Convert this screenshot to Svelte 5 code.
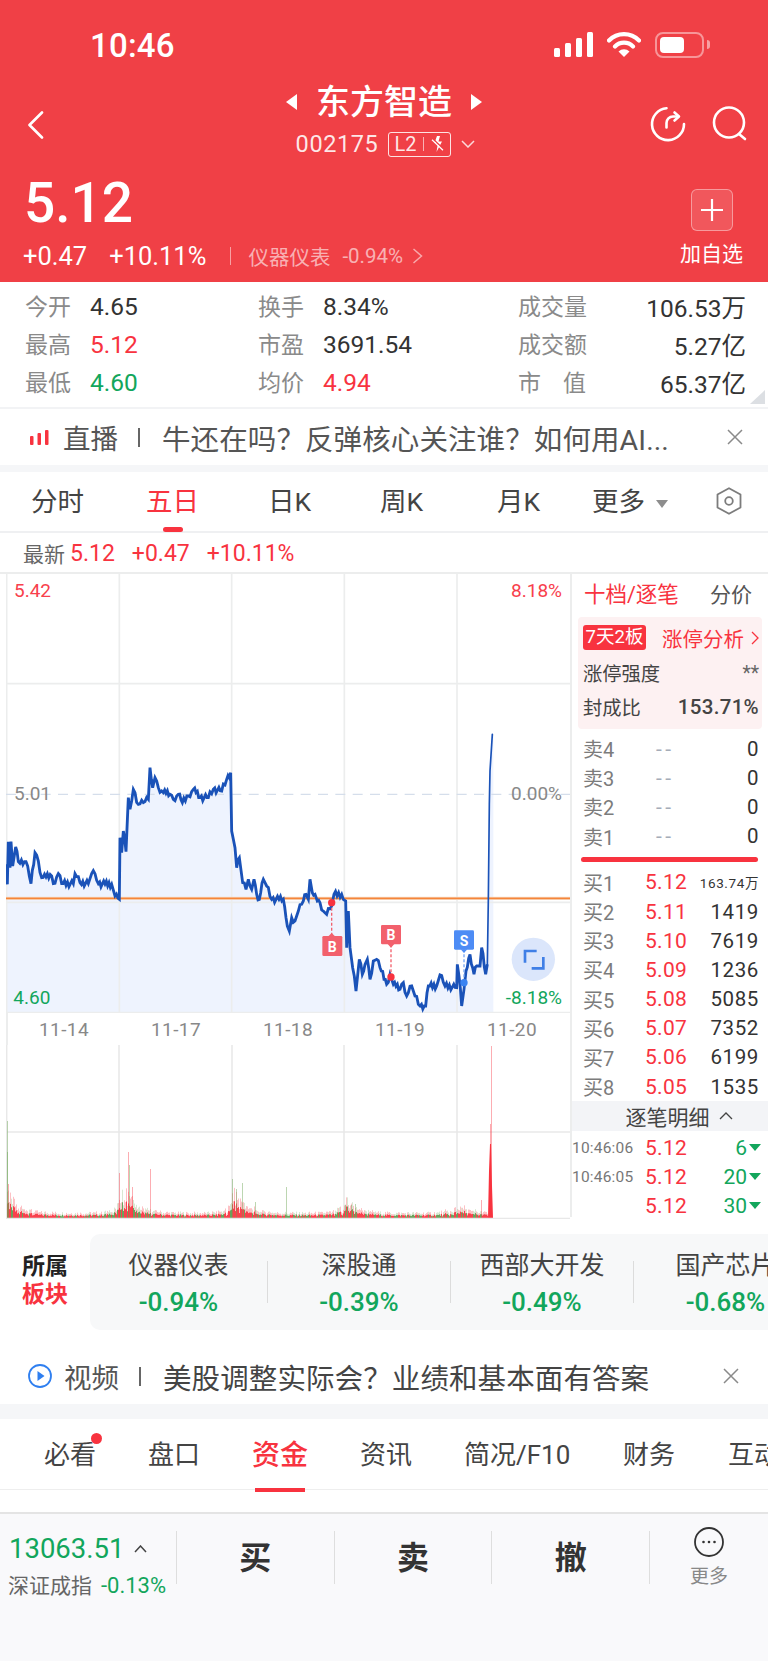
<script>
	const stats = [
		[['今开', '4.65', ''], ['换手', '8.34%', ''], ['成交量', '106.53万', '']],
		[['最高', '5.12', 'up'], ['市盈', '3691.54', ''], ['成交额', '5.27亿', '']],
		[['最低', '4.60', 'down'], ['均价', '4.94', 'up'], ['市值', '65.37亿', '']]
	];
	const periods = ['分时', '五日', '日K', '周K', '月K'];
	const dates = ['11-14', '11-17', '11-18', '11-19', '11-20'];
	const sells = ['卖4', '卖3', '卖2', '卖1'];
	const buys = [
		['买1', '5.12', '163.74万'],
		['买2', '5.11', '1419'],
		['买3', '5.10', '7619'],
		['买4', '5.09', '1236'],
		['买5', '5.08', '5085'],
		['买6', '5.07', '7352'],
		['买7', '5.06', '6199'],
		['买8', '5.05', '1535']
	];
	const trades = [
		['10:46:06', '5.12', '6'],
		['10:46:05', '5.12', '20'],
		['', '5.12', '30']
	];
	const sectors = [
		['仪器仪表', '-0.94%'],
		['深股通', '-0.39%'],
		['西部大开发', '-0.49%'],
		['国产芯片', '-0.68%']
	];
	const tabs = ['必看', '盘口', '资金', '资讯', '简况/F10', '财务', '互动'];
	const qm = '\uFF1F';
	const liveText = `牛还在吗${qm}反弹核心关注谁${qm}如何用AI...`;
	const videoText = `美股调整实际会${qm}业绩和基本面有答案`;

	// price waypoints, measured at 3x (chart svg uses the same units)
	const waypoints = [
		[18,880],[22,940],[25,812],[30,890],[33,812],[38,885],[47,828],[55,872],[78,872],[93,938],[105,845],[115,870],[125,920],
		[155,915],[160,938],[175,908],[185,938],[220,938],[225,908],[240,935],[265,938],[275,908],[285,908],[295,938],[335,940],[345,975],[358,985],
		[360,800],[365,845],[370,780],[378,842],[385,680],[390,715],[400,655],[415,700],[430,695],[445,685],[450,590],[458,650],[465,620],[475,650],
		[490,665],[510,670],[520,685],[535,670],[547,695],[565,675],[580,655],[600,680],[625,680],[640,655],[665,660],[680,625],[692,605],
		[695,780],[705,830],[710,890],[718,860],[728,935],[738,955],[745,925],[755,955],[762,925],[770,970],[778,985],[790,925],[800,945],[815,985],[850,985],
		[858,1040],[862,1065],[868,1080],[875,1040],[885,1050],[895,1020],[910,990],[918,970],[925,985],[930,925],[937,965],[945,970],[952,990],[960,995],
		[970,1020],[980,1030],[995,1005],[1002,970],[1025,970],[1030,985],[1037,990],[1040,1130],[1045,1020],[1050,1130],[1058,1190],[1068,1260],
		[1078,1165],[1087,1210],[1095,1180],[1102,1165],[1110,1225],[1120,1170],[1130,1165],[1140,1190],[1160,1240],[1170,1210],[1180,1240],[1200,1255],
		[1210,1235],[1220,1275],[1235,1245],[1245,1275],[1260,1305],[1277,1305],[1285,1245],[1310,1245],[1320,1212],[1335,1245],[1370,1250],[1372,1180],
		[1377,1215],[1385,1305],[1392,1255],[1398,1200],[1410,1150],[1422,1210],[1430,1185],[1440,1185],[1445,1130],[1457,1210],[1462,1180]
	];
	const tail = [[1462,1180],[1465,985],[1468,700],[1470,600],[1477,490]];
	const wobble = [0, -9, 5, -5, 9, 0, -9];

	function stepped(points) {
		const out = [];
		let k = 0;
		for (let i = 0; i < points.length - 1; i++) {
			const [x0, y0] = points[i];
			const [x1, y1] = points[i + 1];
			const n = Math.max(1, Math.floor((x1 - x0) / 4));
			for (let j = 0; j < n; j++) {
				const x = x0 + ((x1 - x0) * j) / n;
				const y = y0 + ((y1 - y0) * j) / n + (j && n > 1 ? wobble[k++ % 7] : 0);
				out.push(`${x.toFixed(1)},${y.toFixed(1)}`);
			}
		}
		out.push(points[points.length - 1].join(','));
		return out.join(' ');
	}
	const line = stepped(waypoints);
	const tailLine = tail.map((p) => p.join(',')).join(' ');
	const area = `18,1325 ${line} ${tailLine} 1480,490 1480,1325`;

	function rand(i) {
		const s = Math.sin(i * 12.9898) * 43758.5453;
		return s - Math.floor(s);
	}

	// volume bars, x in px from the left of the page, h in px
	const bars = [];
	for (let x = 7; x < 488; x++) {
		const t = ((x - 6) % 113) / 113;
		const session = Math.floor((x - 6) / 113);
		const boost = [12, 20, 14, 9, 5][session];
		const h = 1.5 + rand(x) * 2 + boost * Math.exp(-t * 9) * (0.3 + rand(x + 500)) + 7 * Math.exp(-(1 - t) * 14) * rand(x + 90);
		bars.push({ x, h, green: rand(x + 33) > 0.66 });
	}
	const spikes = [
		[7, 97, 1], [7, 66, 1], [8, 34, 0], [119, 45, 0], [128, 66, 0], [129, 53, 1], [132, 31, 0], [150, 49, 0], [232, 39, 1], [236, 29, 1],
		[242, 35, 1], [255, 16, 1], [286, 31, 1], [345, 13, 1], [351, 13, 1], [355, 14, 1], [481, 18, 0], [491, 172, 0], [490, 94, 0]
	];
</script>

<div class="page">
	<header class="head">
		<div class="status">
			<span class="time">10:46</span>
			<div class="status-icons">
				<svg width="39" height="25" viewBox="0 0 39 25" fill="#fff">
					<rect x="0" y="16" width="6" height="9" rx="1.5" />
					<rect x="11" y="11" width="6" height="14" rx="1.5" />
					<rect x="22" y="6" width="6" height="19" rx="1.5" />
					<rect x="33" y="0" width="6" height="25" rx="1.5" />
				</svg>
				<svg class="wifi" width="34" height="25" viewBox="0 0 34 25">
					<path d="M2 8.5A21 21 0 0 1 32 8.5M8 14.5A12.5 12.5 0 0 1 26 14.5" fill="none" stroke="#fff" stroke-width="4.2" stroke-linecap="round" />
					<path d="M11.5 19.5A8 8 0 0 1 22.5 19.5L17 25Z" fill="#fff" />
				</svg>
				<div class="battery"><i></i></div>
				<span class="nub"></span>
			</div>
		</div>

		<div class="nav">
			<svg class="back" width="17" height="28" viewBox="0 0 17 28">
				<path d="M15 1.5L2.5 14L15 26.5" fill="none" stroke="#fff" stroke-width="2.6" stroke-linecap="round" stroke-linejoin="round" />
			</svg>
			<div class="title">
				<div class="name">
					<span class="tri tri-l"></span>
					<span>东方智造</span>
					<span class="tri tri-r"></span>
				</div>
				<div class="code">
					<span>002175</span>
					<span class="l2">
						L2<i></i>
						<svg width="14" height="18" viewBox="0 0 14 18">
							<path d="M6 1L3.5 8H7L5.5 17L11 6.5H7.5L9 1Z" fill="#fff" />
							<path d="M1.5 3.5L12.5 14" stroke="#f04046" stroke-width="1.5" />
							<path d="M1 4.8L12 15.3" stroke="#fff" stroke-width="1.2" />
						</svg>
					</span>
					<svg width="14" height="8" viewBox="0 0 14 8">
						<path d="M1 1L7 7L13 1" fill="none" stroke="#fff" stroke-opacity="0.8" stroke-width="1.5" />
					</svg>
				</div>
			</div>
			<div class="nav-icons">
				<svg width="36" height="36" viewBox="0 0 36 36" fill="none" stroke="#fff" stroke-width="2.6" stroke-linecap="round" stroke-linejoin="round">
					<path d="M16.5 2.2A16 16 0 1 0 34 18" />
					<path d="M16.5 21.5V17A6.5 6.5 0 0 1 23 10.5H28" />
					<path d="M24.5 6.5L29 10.5L24.5 14.5" />
				</svg>
				<svg width="36" height="36" viewBox="0 0 36 36" fill="none" stroke="#fff" stroke-width="2.6" stroke-linecap="round">
					<circle cx="17" cy="16.5" r="15" />
					<path d="M27 28L33 33" />
				</svg>
			</div>
		</div>

		<div class="quote">
			<div>
				<div class="price">5.12</div>
				<div class="change">
					<span>+0.47</span>
					<span class="ch2">+10.11%</span>
					<i></i>
					<span class="sector">仪器仪表</span>
					<span class="sector-pct">-0.94%</span>
					<svg width="11" height="16" viewBox="0 0 11 16">
						<path d="M1.5 1L9.5 8L1.5 15" fill="none" stroke="#fff" stroke-opacity="0.55" stroke-width="1.5" />
					</svg>
				</div>
			</div>
			<div class="watch">
				<div class="plus">
					<svg width="22" height="22" viewBox="0 0 22 22">
						<path d="M11 0V22M0 11H22" stroke="#fff" stroke-width="2.2" />
					</svg>
				</div>
				<span>加自选</span>
			</div>
		</div>
	</header>

	<section class="stats">
		{#each stats as row}
			{#each row as [label, value, tone], c}
				<div class="stat" class:last={c === 2}>
					<span class="stat-label" class:spread={label === '市值'}>{label}</span>
					<span class="stat-value {tone}">{value}</span>
				</div>
			{/each}
		{/each}
		<span class="corner"></span>
	</section>

	<div class="notice top-rule">
		<svg class="notice-icon" width="19" height="15" viewBox="0 0 19 15" fill="#f8333f">
			<rect x="0" y="6" width="3.5" height="9" rx="1" />
			<rect x="7.5" y="3" width="3.5" height="12" rx="1" />
			<rect x="15" y="0" width="3.5" height="15" rx="1" />
		</svg>
		<span class="notice-tag">直播</span>
		<span class="notice-sep"></span>
		<span class="notice-text">{liveText}</span>
		<svg class="close" width="16" height="16" viewBox="0 0 16 16">
			<path d="M1 1L15 15M15 1L1 15" stroke="#8a8a8a" stroke-width="1.5" />
		</svg>
	</div>
	<div class="gap"></div>

	<nav class="periods">
		{#each periods as p, i}
			<div class="period p{i}" class:on={i === 1}>{p}</div>
		{/each}
		<div class="period more">更多<span class="caret"></span></div>
		<svg class="hex" width="26" height="28" viewBox="0 0 26 28" fill="none" stroke="#7c7c7c" stroke-width="1.8">
			<path d="M13 1.2L24.5 7.5V20.5L13 26.8L1.5 20.5V7.5Z" stroke-linejoin="round" />
			<circle cx="13" cy="14" r="3.8" />
		</svg>
	</nav>

	<div class="latest">
		<span class="latest-label">最新</span>
		<span class="up l1">5.12</span>
		<span class="up l2n">+0.47</span>
		<span class="up">+10.11%</span>
	</div>

	<div class="board">
		<div class="plot">
			<svg class="chart" width="564" height="439" viewBox="18 9 1692 1317" preserveAspectRatio="none">
				<polygon points={area} fill="#eef3fe" />
				<g stroke="#eceded" stroke-width="5" fill="none">
					<path d="M18 338H1710M18 994H1710M18 1325H1710" />
					<path d="M20 9V1326M358 9V1326M695 9V1326M1033 9V1326M1371 9V1326" />
				</g>
				<path d="M18 670H1710" stroke="#d5deeb" stroke-width="4" stroke-dasharray="30 22" />
				<path d="M18 982H1710" stroke="#f6e0cc" stroke-width="10" />
				<path d="M18 982H1710" stroke="#f5853a" stroke-width="5" />
				<polyline points={line} fill="none" stroke="#1a52b8" stroke-width="8.5" stroke-linejoin="miter" />
				<polyline points={tailLine} fill="none" stroke="#1a52b8" stroke-width="5" stroke-linecap="round" />

				<path d="M995 995V1095" stroke="#f2606c" stroke-width="4" stroke-dasharray="9 6" />
				<path d="M1173 1120V1218" stroke="#f2606c" stroke-width="4" stroke-dasharray="9 6" />
				<path d="M1392 1135V1235" stroke="#76a6f3" stroke-width="4" stroke-dasharray="9 6" />
				<circle cx="995" cy="995" r="11" fill="#f8333f" />
				<circle cx="1173" cy="1218" r="11" fill="#f8333f" />
				<circle cx="1392" cy="1235" r="11" fill="#3a83f1" />
				<g fill="#f2606c">
					<rect x="967" y="1095" width="60" height="60" rx="4" />
					<path d="M985 1096L995 1086L1005 1096Z" />
					<rect x="1143" y="1062" width="60" height="58" rx="4" />
					<path d="M1163 1119L1173 1130L1183 1119Z" />
				</g>
				<g fill="#4d8cf5">
					<rect x="1362" y="1078" width="60" height="58" rx="4" />
					<path d="M1382 1135L1392 1146L1402 1135Z" />
				</g>
				<g class="mark" text-anchor="middle">
					<text x="997" y="1142">B</text>
					<text x="1173" y="1108">B</text>
					<text x="1392" y="1124">S</text>
				</g>

				<circle cx="1600" cy="1165" r="65" fill="#dbe6fb" />
				<path d="M1575 1175V1140H1610M1630 1158V1192H1595" fill="none" stroke="#3f7fe6" stroke-width="8" />

				<g class="axis">
					<text x="42" y="78" fill="#f8404c">5.42</text>
					<text x="42" y="688" fill="#888">5.01</text>
					<text x="40" y="1298" fill="#12a65c">4.60</text>
					<text x="1686" y="78" fill="#f8404c" text-anchor="end">8.18%</text>
					<text x="1686" y="688" fill="#888" text-anchor="end">0.00%</text>
					<text x="1686" y="1298" fill="#12a65c" text-anchor="end">-8.18%</text>
				</g>
			</svg>

			<div class="dates">
				{#each dates as d}
					<span>{d}</span>
				{/each}
			</div>

			<svg class="volume" width="564" height="174" viewBox="6 1044 564 174">
				<g stroke="#e8e8e8" fill="none">
					<path d="M6 1131H570" stroke-width="1.5" />
					<path d="M6.7 1044V1218M119 1044V1218M232 1044V1218M344 1044V1218M457 1044V1218" stroke-width="1.5" />
				</g>
				{#each bars as b}
					<rect x={b.x} y={1217 - b.h * 1.8} width="1" height={b.h * 1.8} fill={b.green ? '#7fb46a' : '#f8333f'} opacity="0.3" />
					<rect x={b.x} y={1217 - b.h} width="1" height={b.h} fill={b.green ? '#5f9a4f' : '#f8333f'} opacity="0.9" />
				{/each}
				{#each spikes as [x, h, g]}
					<rect x={x} y={1217 - h} width="1" height={h} fill={g ? '#6aa353' : '#f8333f'} opacity={g ? 0.45 : 0.4} />
				{/each}
				<path d="M488 1217L489 1170L490 1143H491L492 1185L493 1217Z" fill="#f8333f" />
				<path d="M6 1217.5H570" stroke="#e8e8e8" stroke-width="1.5" />
			</svg>
		</div>

		<aside class="side">
			<div class="side-tabs">
				<span class="side-on">十档/逐笔</span>
				<span class="side-off">分价</span>
			</div>

			<div class="limit">
				<div class="limit-top">
					<span class="limit-badge">7天2板</span>
					<span class="limit-link">涨停分析</span>
					<svg width="8" height="14" viewBox="0 0 8 14">
						<path d="M1 1L7 7L1 13" fill="none" stroke="#f8333f" stroke-width="1.3" />
					</svg>
				</div>
				<div class="limit-row"><span>涨停强度</span><span class="stars">**</span></div>
				<div class="limit-row"><span>封成比</span><b>153.71%</b></div>
			</div>

			{#each sells as s}
				<div class="level">
					<span class="lv-name">{s}</span>
					<span class="lv-price empty">--</span>
					<span class="lv-qty">0</span>
				</div>
			{/each}
			<div class="red-bar"></div>
			{#each buys as [s, p, q], i}
				<div class="level">
					<span class="lv-name">{s}</span>
					<span class="lv-price up">{p}</span>
					<span class="lv-qty" class:small={i === 0}>{q}</span>
				</div>
			{/each}

			<div class="detail-bar">
				逐笔明细
				<svg width="14" height="8" viewBox="0 0 14 8">
					<path d="M1 7L7 1L13 7" fill="none" stroke="#444" stroke-width="1.3" />
				</svg>
			</div>
			{#each trades as [t, p, q]}
				<div class="trade">
					<span class="tr-time">{t}</span>
					<span class="tr-price up">{p}</span>
					<span class="tr-qty">{q}<i></i></span>
				</div>
			{/each}
		</aside>
	</div>

	<section class="sectors">
		<div class="sectors-title">所属<em>板块</em></div>
		<div class="sectors-card">
			{#each sectors as [name, pct]}
				<div class="sector-item">
					<span>{name}</span>
					<b>{pct}</b>
				</div>
			{/each}
		</div>
	</section>

	<div class="notice second">
		<svg class="notice-icon play" width="24" height="24" viewBox="0 0 24 24">
			<circle cx="12" cy="12" r="11" fill="none" stroke="#2f7ff0" stroke-width="1.8" />
			<path d="M9.5 7L16.5 12L9.5 17Z" fill="#2f7ff0" />
		</svg>
		<span class="notice-tag">视频</span>
		<span class="notice-sep"></span>
		<span class="notice-text dark">{videoText}</span>
		<svg class="close alt" width="16" height="16" viewBox="0 0 16 16">
			<path d="M1 1L15 15M15 1L1 15" stroke="#8a8a8a" stroke-width="1.5" />
		</svg>
	</div>
	<div class="gap big"></div>

	<nav class="tabs">
		{#each tabs as t, i}
			<div class="tab t{i}" class:on={i === 2}>
				{t}
				{#if i === 0}<span class="dot"></span>{/if}
			</div>
		{/each}
	</nav>

	<footer class="toolbar">
		<div class="index">
			<div class="index-top">
				<span>13063.51</span>
				<svg width="13" height="8" viewBox="0 0 13 8">
					<path d="M1 7L6.5 1L12 7" fill="none" stroke="#444" stroke-width="1.5" />
				</svg>
			</div>
			<div class="index-sub"><span>深证成指</span><b>-0.13%</b></div>
		</div>
		<div class="action">买</div>
		<div class="action">卖</div>
		<div class="action">撤</div>
		<div class="action more-btn">
			<svg width="30" height="30" viewBox="0 0 30 30">
				<circle cx="15" cy="15" r="14" fill="none" stroke="#333" stroke-width="1.8" />
				<circle cx="9.5" cy="15" r="1.3" fill="#333" />
				<circle cx="15" cy="15" r="1.3" fill="#333" />
				<circle cx="20.5" cy="15" r="1.3" fill="#333" />
			</svg>
			<span>更多</span>
		</div>
	</footer>
</div>

<style>
	:global(body) { margin:0; background:#fff; }
	.page {
		width:768px; height:1662px; overflow:hidden; background:#fff; color:#333;
		font-family:Roboto, "Noto Sans CJK SC", sans-serif;
	}
	i, em { font-style:normal; }
	.up { color:#f8333f; }
	.down { color:#12a65c; }

	/* header */
	.head { background:#f04046; height:282px; color:#fff; }
	.status { height:58px; padding:33px 0 0 90px; box-sizing:border-box; display:flex; justify-content:space-between; }
	.time { font-size:33px; line-height:26px; font-weight:500; letter-spacing:0.2px; }
	.status-icons { display:flex; align-items:flex-start; height:26px; margin:-1px 58px 0 0; }
	.wifi { margin-left:14px; }
	.battery {
		width:49px; height:26px; margin-left:14px; box-sizing:border-box;
		border:2px solid rgba(255,255,255,0.45); border-radius:8px; padding:3px;
	}
	.battery i { display:block; width:24px; height:16px; background:#fff; border-radius:4px; }
	.nub { width:3px; height:9px; margin:8px 0 0 3px; background:rgba(255,255,255,0.5); border-radius:0 3px 3px 0; }

	.nav { height:100px; display:grid; grid-template-columns:1fr auto 1fr; }
	.back { margin:53px 0 0 27px; }
	.title { display:flex; flex-direction:column; align-items:center; padding-top:26px; }
	.name { display:flex; align-items:center; gap:19px; font-size:34px; line-height:36px; font-weight:500; }
	.tri { width:0; height:0; border-style:solid; border-color:transparent; border-width:8px 0; }
	.tri-l { border-right:11px solid #fff; }
	.tri-r { border-left:11px solid #fff; }
	.code { display:flex; align-items:center; gap:10px; height:26px; margin:11px 0 0 3px; font-size:23.5px; letter-spacing:0.6px; color:rgba(255,255,255,0.88); }
	.l2 {
		display:flex; align-items:center; height:25px; width:63px; box-sizing:border-box; padding:0 5px;
		border:1.5px solid rgba(255,255,255,0.85); border-radius:3px; font-size:20px; letter-spacing:0;
	}
	.l2 i { width:1px; height:14px; background:rgba(255,255,255,0.6); margin:0 7px; }
	.nav-icons { display:flex; justify-content:flex-end; gap:26px; padding:48px 20px 0 0; }

	.quote { display:flex; justify-content:space-between; padding:0 25px 0 24px; }
	.price { font-size:55px; line-height:56px; margin-top:17px; font-weight:500; }
	.change { display:flex; align-items:center; height:30px; margin-top:10px; font-size:25.5px; margin-left:-1px; }
	.ch2 { margin-left:22px; }
	.change i { width:1px; height:18px; background:rgba(255,255,255,0.5); margin:0 17px 0 24px; }
	.sector, .sector-pct { font-size:20.5px; color:rgba(255,255,255,0.6); }
	.sector-pct { margin:0 9px 0 12px; }
	.watch { display:flex; flex-direction:column; align-items:center; padding-top:31px; font-size:21px; }
	.plus {
		width:42px; height:42px; display:flex; align-items:center; justify-content:center; box-sizing:border-box;
		background:rgba(255,255,255,0.12); border:1.5px solid rgba(255,255,255,0.4); border-radius:6px;
	}
	.watch span { margin-top:8px; line-height:30px; }

	/* stats */
	.stats {
		position:relative; height:125px; box-sizing:border-box; padding:5px 22px 0 25px;
		display:grid; grid-template-columns:233px 260px 1fr; grid-auto-rows:38px;
	}
	.stat { display:flex; align-items:center; gap:19px; font-size:23px; }
	.stat-label { color:#8a8a8a; margin-top:-2px; }
	.stat-value { font-size:24.5px; }
	.stat.last { justify-content:space-between; }
	.spread { width:68px; text-align-last:justify; }
	.corner { position:absolute; right:3px; bottom:3px; width:0; height:0; border-style:solid; border-width:0 0 14px 15px; border-color:transparent transparent #dcdfe3; }

	/* notice banners */
	.notice { display:flex; align-items:center; height:56px; font-size:27.5px; color:#555; }
	.top-rule { border-top:2px solid #f2f3f5; }
	.notice-icon { margin-left:30px; flex:none; }
	.notice-icon.play { margin-left:28px; margin-right:-2px; }
	.notice-tag { margin-left:14px; }
	.notice-sep { width:2px; height:19px; background:#666; margin:0 22px 0 20px; }
	.notice-text { flex:1; font-size:28.5px; letter-spacing:0.1px; white-space:nowrap; }
	.notice-text.dark { color:#444; }
	.close { margin-right:25px; }
	.close.alt { margin-right:29px; }
	.gap { height:7px; background:#f5f6f8; }
	.gap.big { height:15px; }

	/* period tabs */
	.periods { position:relative; height:59px; border-bottom:2px solid #eff0f2; font-size:26.5px; color:#444; }
	.period { position:absolute; top:0; line-height:60px; }
	.p0 { left:31px; } .p1 { left:146px; } .p2 { left:268px; } .p3 { left:380px; } .p4 { left:497px; }
	.period.on { color:#f8333f; }
	.period.on::after {
		content:""; position:absolute; left:17px; bottom:0; width:20px; height:5px; border-radius:3px; background:#f8333f;
	}
	.more { left:592px; }
	.caret {
		display:inline-block; margin-left:11px; vertical-align:3px; width:0; height:0;
		border-style:solid; border-width:8px 6px 0; border-color:#8d8d8d transparent transparent;
	}
	.hex { position:absolute; left:716px; top:15px; }

	.latest { display:flex; align-items:center; height:40px; padding-left:23px; font-size:23px; }
	.latest-label { color:#666; font-size:21px; }
	.l1 { margin-left:5px; }
	.l2n { margin:0 17px; }

	/* chart board */
	.board { display:flex; height:645px; border-top:2px solid #eceded; margin-top:-1px; box-sizing:border-box; }
	.plot { width:570px; padding-left:6px; box-sizing:border-box; flex:none; }
	.chart, .volume { display:block; }
	.mark text { font:700 42px Roboto, sans-serif; fill:#fff; }
	.axis text { font-size:57px; }
	.dates { display:grid; grid-template-columns:repeat(5, 1fr); height:32px; border-left:2px solid #eceded; text-align:center; font-size:19px; line-height:33px; color:#888; letter-spacing:0.4px; margin-right:2px; }

	.side { flex:1; border-left:2px solid #eceded; box-sizing:border-box; font-size:20px; }
	.side-tabs { display:flex; justify-content:space-between; height:37px; padding:0 18px 6px 12px; align-items:center; font-size:21px; }
	.side-on { color:#f8333f; font-size:21.5px; }
	.side-off { color:#555; }
	.limit {
		margin:0 8px 0 6px; height:112px; box-sizing:border-box; padding:8px 3px 0 5px;
		background:#fdf1f2; border-radius:4px; font-size:19.3px; color:#444;
	}
	.limit-top { display:flex; align-items:center; height:25px; }
	.limit-badge { background:#f8333f; color:#fff; border-radius:3px; width:63px; line-height:25px; text-align:center; font-size:18.5px; }
	.limit-link { color:#f8333f; margin:0 7px 0 16px; white-space:nowrap; font-size:20.5px; }
	.limit-row { display:flex; justify-content:space-between; align-items:center; height:34px; }
	.limit-row:nth-child(2) { margin-top:6px; }
	.limit-row b { font-weight:500; font-size:20.5px; letter-spacing:0.3px; }
	.stars { color:#666; }

	.level { display:flex; align-items:center; height:29.2px; padding:0 11px; }
	.limit + .level { margin-top:5px; }
	.lv-name { width:62px; color:#7c7c7c; }
	.lv-price { flex:1; font-size:21px; letter-spacing:0.3px; }
	.lv-price.empty { padding-left:11px; color:#a5acb8; letter-spacing:3.5px; }
	.lv-qty { font-size:20.5px; color:#333; letter-spacing:0.6px; }
	.lv-qty.small { font-size:13.5px; }
	.red-bar { height:5px; margin:6px 12px 6px 9px; border-radius:3px; background:#f8333f; }
	.detail-bar {
		display:flex; justify-content:center; align-items:center; gap:9px; height:30px; padding-left:16px;
		background:#f3f4f7; font-size:21px; color:#444;
	}
	.trade { display:flex; align-items:center; height:29px; padding:0 9px 0 0; }
	.detail-bar + .trade { margin-top:2px; }
	.tr-time { width:73px; font-size:15.5px; color:#777; letter-spacing:0.2px; flex:none; }
	.tr-price { flex:1; font-size:21px; letter-spacing:0.3px; }
	.tr-qty { display:flex; align-items:center; gap:2px; color:#12a65c; font-size:21px; }
	.tr-qty i { width:0; height:0; border-style:solid; border-width:7px 6.5px 0; border-color:#12a65c transparent transparent; }

	/* sector strip */
	.sectors { display:flex; height:131px; padding-top:17px; box-sizing:border-box; }
	.sectors-title { width:90px; box-sizing:border-box; padding:19px 0 0 22px; font-size:23px; line-height:28px; font-weight:700; color:#222; }
	.sectors-title em { display:block; color:#f8333f; }
	.sectors-card { flex:1; display:flex; height:96px; background:#f7f8f9; border-radius:10px 0 0 10px; overflow:hidden; }
	.sector-item {
		flex:none; width:183px; height:42px; margin-top:27px; box-sizing:border-box; border-right:1.5px solid #dcdcdc;
		display:flex; flex-direction:column; align-items:center; position:relative;
	}
	.sector-item:first-child { width:178px; }
	.sector-item span { position:absolute; top:-13px; font-size:25px; line-height:36px; color:#444; white-space:nowrap; }
	.sector-item b { position:absolute; top:23px; font-size:26px; line-height:36px; font-weight:500; color:#12a65c; white-space:nowrap; }
	.sector-item:last-child { border-right:0; }

	/* bottom tabs */
	.tabs { position:relative; height:71px; border-bottom:1.5px solid #eee; font-size:26px; color:#444; box-sizing:border-box; }
	.tab { position:absolute; top:0; line-height:73px; white-space:nowrap; }
	.t0 { left:44px; } .t1 { left:148px; } .t2 { left:252px; } .t3 { left:360px; } .t4 { left:464px; } .t5 { left:623px; } .t6 { left:728px; }
	.tab.on { color:#f8333f; font-weight:500; font-size:28px; }
	.tab.on::after { content:""; position:absolute; left:3px; right:3px; bottom:0; height:4px; background:#f8333f; }
	.dot { position:absolute; left:47px; top:14px; width:11px; height:11px; border-radius:50%; background:#f8333f; }

	/* toolbar */
	.toolbar {
		display:flex; height:149px; margin-top:22px; box-sizing:border-box; padding-top:17px;
		background:#f9f9fb; border-top:2px solid #e4e4e4;
	}
	.index { width:177px; height:53px; box-sizing:border-box; padding-left:9px; border-right:1.5px solid #dedede; flex:none; }
	.index-top { display:flex; align-items:center; gap:10px; color:#12a65c; font-size:27.5px; line-height:30px; margin-top:3px; }
	.index-sub { display:flex; gap:9px; font-size:21px; line-height:30px; color:#666; margin:7px 0 0 -1px; white-space:nowrap; }
	.index-sub b { font-weight:400; font-size:22px; color:#12a65c; }
	.action {
		flex:none; width:157.7px; height:53px; padding-bottom:5px; box-sizing:border-box; border-right:1.5px solid #dedede;
		display:flex; align-items:center; justify-content:center; font-size:32px; font-weight:700; color:#333;
	}
	.more-btn {
		width:118px; height:60px; padding-bottom:0; border-right:0; flex-direction:column; justify-content:flex-start;
		margin-top:-4px; font-size:19px; font-weight:400; color:#888;
	}
	.more-btn svg { flex:none; }
	.more-btn span { margin-top:8px; line-height:24px; }
</style>
